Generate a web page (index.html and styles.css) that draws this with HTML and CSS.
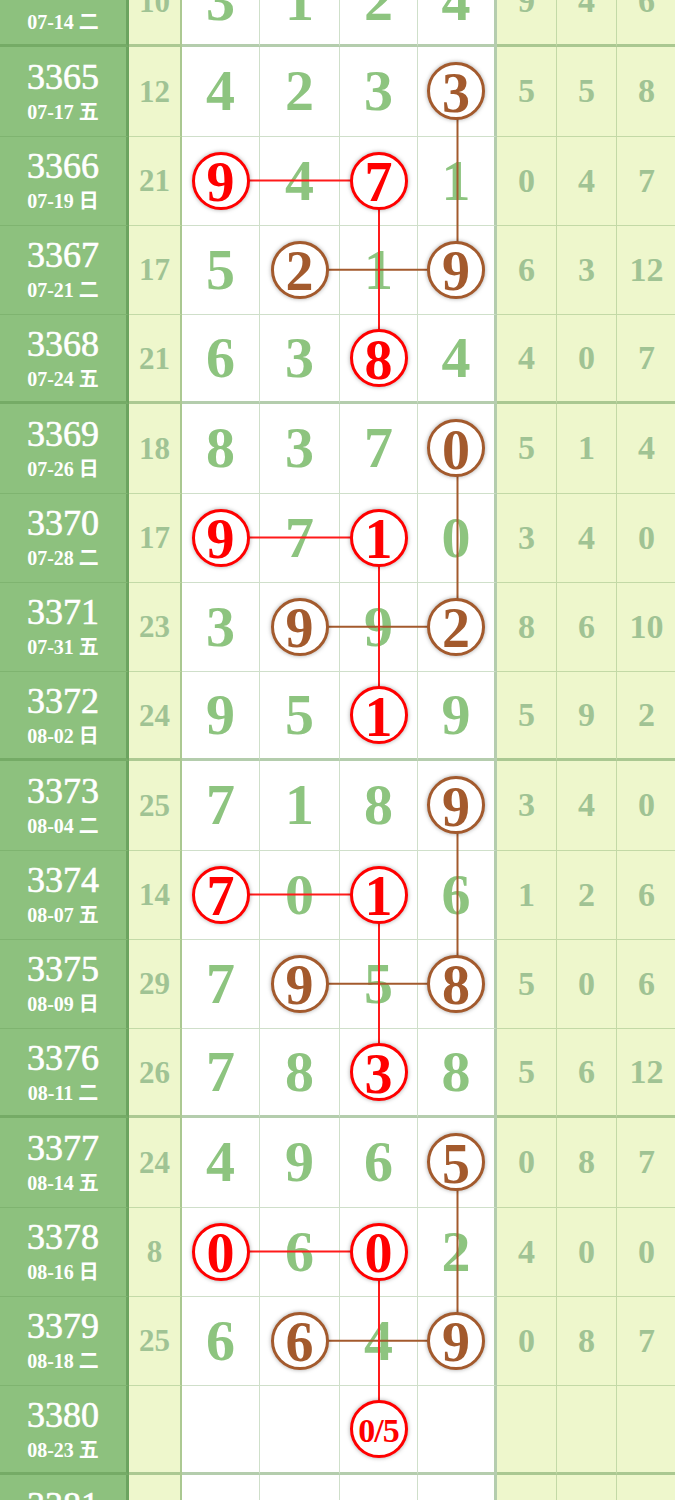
FILE: index.html
```html
<!DOCTYPE html>
<html lang="zh-CN">
<head>
  <meta charset="UTF-8" />
  <meta name="viewport" content="width=device-width, initial-scale=1.0"/>
  <title>走势图</title>
  <link rel="stylesheet" href="styles.css">
</head>
<body>

  <!-- Trend chart -->
  <div class="chart">

    <!-- connecting lines, drawn under the balls -->
    <svg class="links" width="677" height="1518" viewBox="0 0 677 1518">
      <g class="brown">
        <line x1="457.5" y1="133.25" x2="457.5" y2="311.75"/>
        <line x1="300" y1="311.75" x2="457.5" y2="311.75"/>
        <line x1="457.5" y1="490.25" x2="457.5" y2="668.75"/>
        <line x1="300" y1="668.75" x2="457.5" y2="668.75"/>
        <line x1="457.5" y1="847.25" x2="457.5" y2="1025.75"/>
        <line x1="300" y1="1025.75" x2="457.5" y2="1025.75"/>
        <line x1="457.5" y1="1204.25" x2="457.5" y2="1382.75"/>
        <line x1="300" y1="1382.75" x2="457.5" y2="1382.75"/>
      </g>
      <g class="red">
        <line x1="221" y1="222.5" x2="379" y2="222.5"/>
        <line x1="379" y1="222.5" x2="379" y2="401"/>
        <line x1="221" y1="579.5" x2="379" y2="579.5"/>
        <line x1="379" y1="579.5" x2="379" y2="758"/>
        <line x1="221" y1="936.5" x2="379" y2="936.5"/>
        <line x1="379" y1="936.5" x2="379" y2="1115"/>
        <line x1="221" y1="1293.5" x2="379" y2="1293.5"/>
        <line x1="379" y1="1293.5" x2="379" y2="1472"/>
      </g>
    </svg>

    <table class="trend">
      <colgroup>
        <col class="c-issue">
        <col class="c-sum">
        <col class="c-num"><col class="c-num2"><col class="c-num"><col class="c-num3">
        <col class="c-tail"><col class="c-tail"><col class="c-tail">
      </colgroup>
      <tbody>
        <tr class="end">
          <th class="issue"><b>3364</b><small>07-14 二</small></th>
          <td class="sum">10</td>
          <td>3</td><td>1</td><td>2</td><td class="last">4</td>
          <td class="tail">9</td><td class="tail">4</td><td class="tail">6</td>
        </tr>

        <tr>
          <th class="issue"><b>3365</b><small>07-17 五</small></th>
          <td class="sum">12</td>
          <td>4</td><td>2</td><td>3</td><td class="last"><span class="ball brown">3</span></td>
          <td class="tail">5</td><td class="tail">5</td><td class="tail">8</td>
        </tr>
        <tr>
          <th class="issue"><b>3366</b><small>07-19 日</small></th>
          <td class="sum">21</td>
          <td><span class="ball red">9</span></td><td>4</td><td><span class="ball red">7</span></td><td class="last">1</td>
          <td class="tail">0</td><td class="tail">4</td><td class="tail">7</td>
        </tr>
        <tr>
          <th class="issue"><b>3367</b><small>07-21 二</small></th>
          <td class="sum">17</td>
          <td>5</td><td><span class="ball brown">2</span></td><td>1</td><td class="last"><span class="ball brown">9</span></td>
          <td class="tail">6</td><td class="tail">3</td><td class="tail">12</td>
        </tr>
        <tr class="end">
          <th class="issue"><b>3368</b><small>07-24 五</small></th>
          <td class="sum">21</td>
          <td>6</td><td>3</td><td><span class="ball red">8</span></td><td class="last">4</td>
          <td class="tail">4</td><td class="tail">0</td><td class="tail">7</td>
        </tr>

        <tr>
          <th class="issue"><b>3369</b><small>07-26 日</small></th>
          <td class="sum">18</td>
          <td>8</td><td>3</td><td>7</td><td class="last"><span class="ball brown">0</span></td>
          <td class="tail">5</td><td class="tail">1</td><td class="tail">4</td>
        </tr>
        <tr>
          <th class="issue"><b>3370</b><small>07-28 二</small></th>
          <td class="sum">17</td>
          <td><span class="ball red">9</span></td><td>7</td><td><span class="ball red">1</span></td><td class="last">0</td>
          <td class="tail">3</td><td class="tail">4</td><td class="tail">0</td>
        </tr>
        <tr>
          <th class="issue"><b>3371</b><small>07-31 五</small></th>
          <td class="sum">23</td>
          <td>3</td><td><span class="ball brown">9</span></td><td>9</td><td class="last"><span class="ball brown">2</span></td>
          <td class="tail">8</td><td class="tail">6</td><td class="tail">10</td>
        </tr>
        <tr class="end">
          <th class="issue"><b>3372</b><small>08-02 日</small></th>
          <td class="sum">24</td>
          <td>9</td><td>5</td><td><span class="ball red">1</span></td><td class="last">9</td>
          <td class="tail">5</td><td class="tail">9</td><td class="tail">2</td>
        </tr>

        <tr>
          <th class="issue"><b>3373</b><small>08-04 二</small></th>
          <td class="sum">25</td>
          <td>7</td><td>1</td><td>8</td><td class="last"><span class="ball brown">9</span></td>
          <td class="tail">3</td><td class="tail">4</td><td class="tail">0</td>
        </tr>
        <tr>
          <th class="issue"><b>3374</b><small>08-07 五</small></th>
          <td class="sum">14</td>
          <td><span class="ball red">7</span></td><td>0</td><td><span class="ball red">1</span></td><td class="last">6</td>
          <td class="tail">1</td><td class="tail">2</td><td class="tail">6</td>
        </tr>
        <tr>
          <th class="issue"><b>3375</b><small>08-09 日</small></th>
          <td class="sum">29</td>
          <td>7</td><td><span class="ball brown">9</span></td><td>5</td><td class="last"><span class="ball brown">8</span></td>
          <td class="tail">5</td><td class="tail">0</td><td class="tail">6</td>
        </tr>
        <tr class="end">
          <th class="issue"><b>3376</b><small>08-11 二</small></th>
          <td class="sum">26</td>
          <td>7</td><td>8</td><td><span class="ball red">3</span></td><td class="last">8</td>
          <td class="tail">5</td><td class="tail">6</td><td class="tail">12</td>
        </tr>

        <tr>
          <th class="issue"><b>3377</b><small>08-14 五</small></th>
          <td class="sum">24</td>
          <td>4</td><td>9</td><td>6</td><td class="last"><span class="ball brown">5</span></td>
          <td class="tail">0</td><td class="tail">8</td><td class="tail">7</td>
        </tr>
        <tr>
          <th class="issue"><b>3378</b><small>08-16 日</small></th>
          <td class="sum">8</td>
          <td><span class="ball red">0</span></td><td>6</td><td><span class="ball red">0</span></td><td class="last">2</td>
          <td class="tail">4</td><td class="tail">0</td><td class="tail">0</td>
        </tr>
        <tr>
          <th class="issue"><b>3379</b><small>08-18 二</small></th>
          <td class="sum">25</td>
          <td>6</td><td><span class="ball brown">6</span></td><td>4</td><td class="last"><span class="ball brown">9</span></td>
          <td class="tail">0</td><td class="tail">8</td><td class="tail">7</td>
        </tr>
        <tr class="end">
          <th class="issue"><b>3380</b><small>08-23 五</small></th>
          <td class="sum"></td>
          <td></td><td></td><td><span class="ball red guess">0/5</span></td><td class="last"></td>
          <td class="tail"></td><td class="tail"></td><td class="tail"></td>
        </tr>

        <tr>
          <th class="issue"><b>3381</b><small>08-25 日</small></th>
          <td class="sum"></td>
          <td></td><td></td><td></td><td class="last"></td>
          <td class="tail"></td><td class="tail"></td><td class="tail"></td>
        </tr>
      </tbody>
    </table>
  </div>

</body>
</html>
```

FILE: styles.css
```css
body {
  margin: 0;
  background-color: #fff;
  font-family: "Liberation Serif", "Noto Sans CJK SC", serif;
  overflow-x: hidden;
}

/* CHART */
.chart {
  position: relative;
  z-index: 0;
  width: 677px;
  margin-top: -42px;
}

.links {
  position: absolute;
  top: 0;
  left: 0;
  z-index: 1;
  pointer-events: none;
}

.links line {
  stroke-width: 2;
}

.links .red line {
  stroke: #ff1a1a;
}

.links .brown line {
  stroke: #a35a2d;
}

.trend {
  width: 677px;
  table-layout: fixed;
  border-collapse: separate;
  border-spacing: 0;
}

.c-issue { width: 129px; }
.c-sum   { width: 53px; }
.c-num   { width: 78px; }
.c-num2  { width: 80px; }
.c-num3  { width: 79px; }
.c-tail  { width: 60px; }

.trend tr {
  height: 89.25px;
}

.trend th,
.trend td {
  padding: 0;
  text-align: center;
  vertical-align: middle;
  border-right: 1px solid rgba(96, 150, 80, 0.3);
  border-bottom: 1px solid rgba(96, 150, 80, 0.3);
}

.trend tr.end th,
.trend tr.end td {
  border-bottom: 3px solid rgba(90, 145, 75, 0.45);
}

/* issue column */
.trend th.issue {
  background-color: #8dc17e;
  color: #fff;
  border-right: 3px solid rgba(70, 130, 60, 0.45);
}

.issue b {
  display: block;
  font-size: 36px;
  font-weight: normal;
  line-height: 38px;
  margin-top: -1px;
  -webkit-text-stroke: 0.6px #fff;
}

.issue small {
  display: block;
  font-size: 20px;
  font-weight: bold;
  line-height: 24px;
  margin-top: 4px;
}

/* digit columns */
.trend td {
  font-size: 58px;
  font-weight: bold;
  line-height: 1;
  color: #8dc47f;
}

.trend td.last {
  border-right: 3px solid rgba(90, 145, 75, 0.45);
}

/* sum column */
.trend td.sum {
  background-color: #eef7cc;
  color: #a0c394;
  font-size: 31px;
  border-right: 2px solid rgba(90, 145, 75, 0.45);
}

.trend td.tail {
  background-color: #eef7cc;
  color: #a0c394;
  font-size: 34px;
}

/* balls */
.ball {
  position: relative;
  z-index: 2;
  display: flex;
  align-items: center;
  justify-content: center;
  box-sizing: content-box;
  width: 52px;
  height: 49px;
  padding-top: 3px;
  margin: 0 auto;
  border: 3px solid;
  border-radius: 50%;
  background-color: #fff;
  font-size: 56px;
  box-shadow: 0 0 4px rgba(0, 0, 0, 0.35);
}

.ball.red {
  color: #ff0000;
  border-color: #ff0000;
}

.ball.brown {
  color: #a35a2d;
  border-color: #a35a2d;
}

.ball.guess {
  font-size: 34px;
  letter-spacing: -1px;
}
```
